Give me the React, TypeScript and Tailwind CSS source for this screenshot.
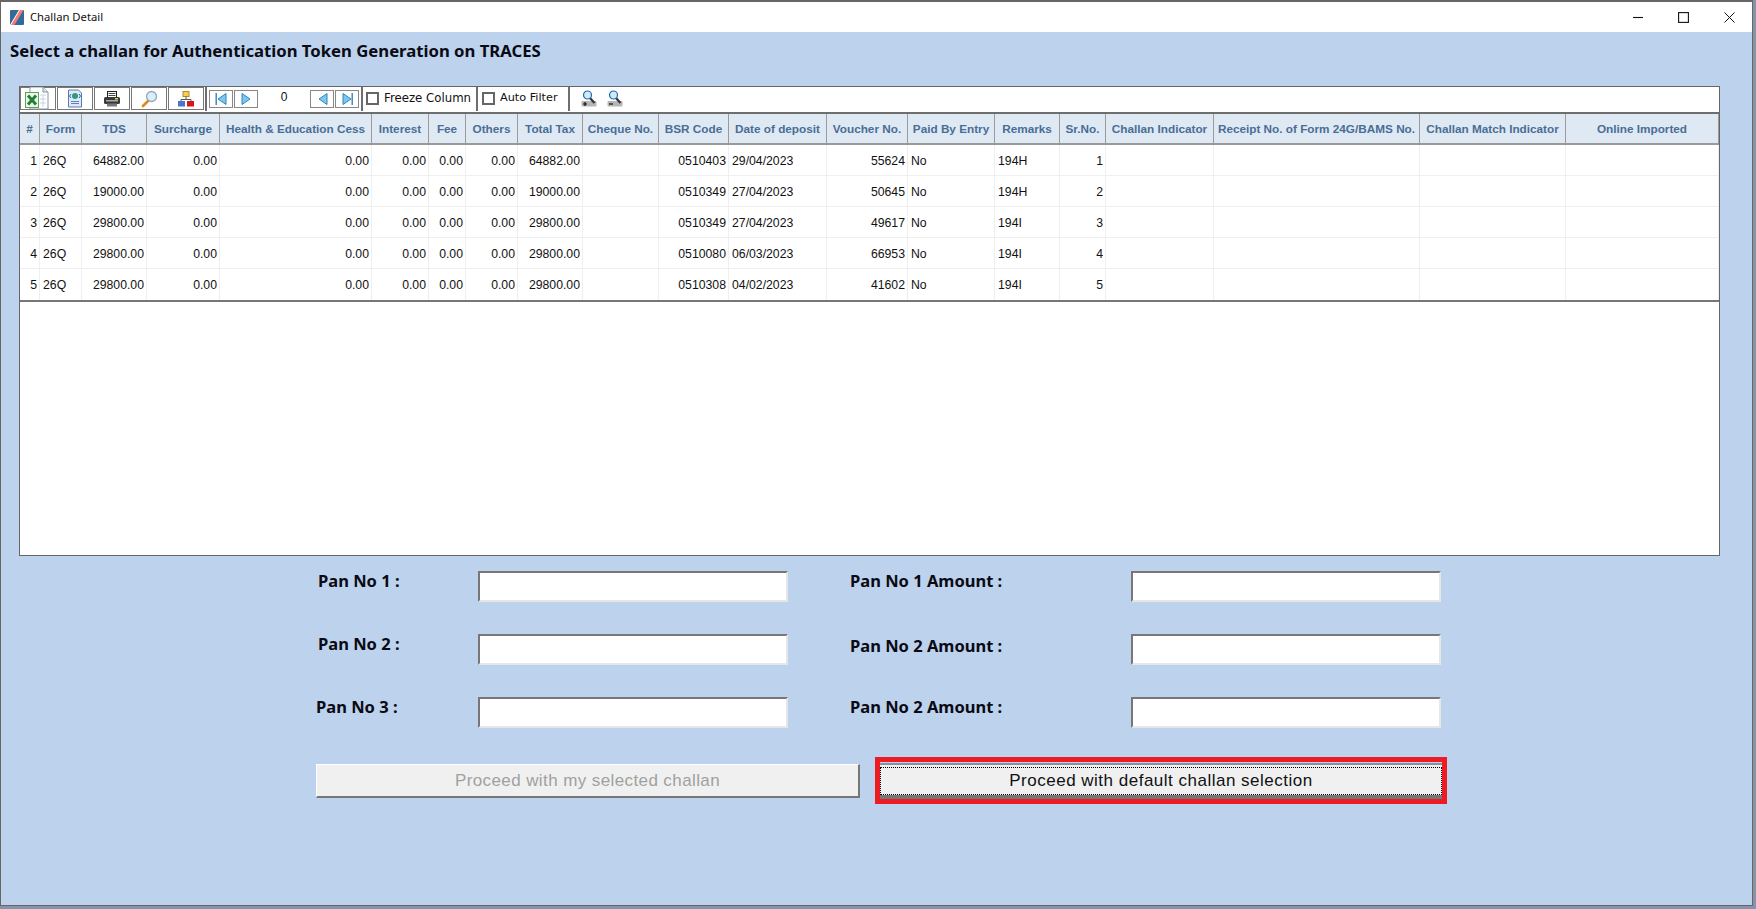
const cols =
  'grid grid-cols-[20px_42px_65px_73px_152px_57px_37px_52px_65px_76px_70px_98px_81px_87px_65px_46px_108px_206px_146px_153px]';

const headers = [
  '#', 'Form', 'TDS', 'Surcharge', 'Health & Education Cess', 'Interest', 'Fee', 'Others', 'Total Tax',
  'Cheque No.', 'BSR Code', 'Date of deposit', 'Voucher No.', 'Paid By Entry', 'Remarks', 'Sr.No.',
  'Challan Indicator', 'Receipt No. of Form 24G/BAMS No.', 'Challan Match Indicator', 'Online Imported',
];

const rows = [
  ['1', '26Q', '64882.00', '0510403', '29/04/2023', '55624', '194H'],
  ['2', '26Q', '19000.00', '0510349', '27/04/2023', '50645', '194H'],
  ['3', '26Q', '29800.00', '0510349', '27/04/2023', '49617', '194I'],
  ['4', '26Q', '29800.00', '0510080', '06/03/2023', '66953', '194I'],
  ['5', '26Q', '29800.00', '0510308', '04/02/2023', '41602', '194I'],
];

function Cell({ children, left }: { children?: React.ReactNode; left?: boolean }) {
  return (
    <div
      className={`flex items-center border-r border-r-[#efefef] h-full pt-[2px] ${
        left ? 'justify-start pl-[3px]' : 'justify-end pr-[2px]'
      }`}
    >
      {children}
    </div>
  );
}

function ToolButton({ children }: { children: React.ReactNode }) {
  return (
    <div className="w-[36px] h-[23px] border border-[#777] flex items-center justify-center bg-white">
      {children}
    </div>
  );
}

function NavButton({ children }: { children: React.ReactNode }) {
  return (
    <div className="w-[24px] h-[18px] border border-[#888] flex items-center justify-center bg-white">{children}</div>
  );
}

function Tri({ dir, bar }: { dir: 'l' | 'r'; bar?: boolean }) {
  const points = dir === 'l' ? '12,1.5 12,12.5 4,7' : '3,1.5 3,12.5 11,7';
  return (
    <svg width="14" height="14" viewBox="0 0 14 14">
      <polygon points={points} fill="#7ec6ec" stroke="#2f86bf" strokeWidth="1" />
      {bar && (
        <rect x={dir === 'l' ? 1.5 : 11.5} y="1" width="1.4" height="12" fill="#2f86bf" />
      )}
    </svg>
  );
}

function ZoomIcon({ minus }: { minus?: boolean }) {
  return (
    <svg width="16" height="17" viewBox="0 0 16 17">
      <rect x="0.5" y="11" width="15" height="5.5" rx="1" fill="#b5b5b5" />
      <path d={minus ? 'M2 14h4' : 'M2 14h4M4 12v4'} stroke="#111" strokeWidth="1.2" fill="none" />
      <path d="M9 8l4.5 5" stroke="#333" strokeWidth="2.2" fill="none" />
      <circle cx="6.5" cy="5" r="4" fill="#cfeaf8" stroke="#1f6fa8" strokeWidth="1.2" />
    </svg>
  );
}

function Toolbar() {
  return (
    <div className="h-[25px] flex items-start bg-white text-[#111]">
      <div className="flex gap-[1px] w-[185px]">
        <ToolButton>
          <svg width="30" height="25" viewBox="0 0 30 25" className="-ml-[8px] -mt-[1px]">
            <path d="M11 1h13l5 5v17H11z" fill="#fff" stroke="#8a97a5" />
            <path d="M24 1v5h5" fill="#dbe4ee" stroke="#8a97a5" />
            <path d="M21 9h6M21 13h6M21 17h6M24 9v12" stroke="#c6d4e2" fill="none" />
            <rect x="6.500" y="6.500" width="13" height="15" fill="#eef6e8" stroke="#5aa35a" />
            <path d="M9 9.500l8 9M17 9.500l-8 9" stroke="#23803a" strokeWidth="3" fill="none" />
          </svg>
        </ToolButton>
        <ToolButton>
          <svg width="16" height="19" viewBox="0 0 16 19">
            <path d="M1.500 1h10l3 3v14h-13z" fill="#dfe9fa" stroke="#5a7bb0" />
            <path d="M4 12.500h8M4 14.500h8" stroke="#5b82c4" fill="none" />
            <circle cx="8" cy="7" r="3" fill="#2f9a7a" />
            <path d="M4 5l-1.500 2 1.500 2M12 5l1.500 2-1.500 2" stroke="#2a5ea8" fill="none" />
          </svg>
        </ToolButton>
        <ToolButton>
          <svg width="18" height="16" viewBox="0 0 18 16">
            <rect x="4.500" y="0.500" width="9" height="6" fill="#fff" stroke="#222" />
            <path d="M5.500 2.500h7M5.500 4.500h7" stroke="#444" fill="none" />
            <rect x="1" y="6" width="16" height="7" rx="1.500" fill="#3a3a3a" />
            <rect x="3" y="9" width="12" height="1.500" fill="#aaa" />
            <rect x="12" y="7" width="3" height="1.500" fill="#e3d23a" />
            <rect x="4" y="12.500" width="10" height="3" fill="#777" />
          </svg>
        </ToolButton>
        <ToolButton>
          <svg width="17" height="18" viewBox="0 0 17 18">
            <path d="M7 11l-5 5" stroke="#e08a1e" strokeWidth="2.800" strokeLinecap="round" fill="none" />
            <circle cx="10.500" cy="6.500" r="5" fill="#dbeefb" stroke="#8fa9c4" strokeWidth="1.300" />
          </svg>
        </ToolButton>
        <ToolButton>
          <svg width="16" height="16" viewBox="0 0 16 16">
            <rect x="5" y="0.500" width="6" height="5" fill="#f4cf57" stroke="#b18e22" />
            <path d="M8 5.500v3M3 10V8.500h10V10" stroke="#555" fill="none" />
            <rect x="0" y="10" width="7" height="5.500" fill="#4a76c9" />
            <rect x="9" y="10" width="7" height="5.500" fill="#d5161c" />
          </svg>
        </ToolButton>
      </div>
      <div className="h-[25px] w-[158px] border-l-2 border-r-2 border-[#6e6e6e] flex items-center pl-[2px] -mt-[1px]">
        <NavButton>
          <Tri dir="l" bar />
        </NavButton>
        <div className="ml-[1px]">
          <NavButton>
            <Tri dir="r" />
          </NavButton>
        </div>
        <div className="w-[52px] text-center text-[12px] -mt-[3px]">0</div>
        <NavButton>
          <Tri dir="l" />
        </NavButton>
        <div className="ml-[1px]">
          <NavButton>
            <Tri dir="r" bar />
          </NavButton>
        </div>
      </div>
      <label className="h-[25px] w-[115px] border-r-2 border-[#6e6e6e] flex items-center pl-[3px] -mt-[1px] font-['DejaVu_Sans'] text-[11.75px]">
        <span className="w-[13px] h-[13px] border-2 border-[#666] bg-white" />
        <span className="ml-[5px]">Freeze Column</span>
      </label>
      <label className="h-[25px] w-[92px] border-r-2 border-[#6e6e6e] flex items-center pl-[4px] -mt-[1px] font-['DejaVu_Sans'] text-[11.25px]">
        <span className="w-[13px] h-[13px] border-2 border-[#666] bg-white" />
        <span className="ml-[5px]">Auto Filter</span>
      </label>
      <div className="flex items-center gap-[10px] pl-[11px] h-[25px] -mt-[1px]">
        <ZoomIcon />
        <ZoomIcon minus />
      </div>
    </div>
  );
}

function Grid() {
  return (
    <div className="h-[470px] bg-white border border-[#666] ml-[18px] w-[1701px] overflow-hidden">
      <Toolbar />
      <div className={`${cols} h-[33px] bg-[#dfe9f3] border-t-2 border-b-2 border-t-[#6e6e6e] border-b-[#999]`}>
        {headers.map((h) => (
          <div
            key={h}
            className="flex items-center justify-center border-r-[1.5px] border-r-[#9a9a9a] text-[#4a6d96] font-bold text-[11.75px] whitespace-nowrap"
          >
            {h}
          </div>
        ))}
      </div>
      <div className="border-b-2 border-b-[#777] text-[12.25px] text-[#111]">
        {rows.map((r, i) => (
          <div
            key={r[0]}
            className={`${cols} h-[31px] ${i < rows.length - 1 ? 'border-b-[1.5px] border-b-[#efefef]' : ''}`}
          >
            <Cell>{r[0]}</Cell>
            <Cell left>{r[1]}</Cell>
            <Cell>{r[2]}</Cell>
            <Cell>0.00</Cell>
            <Cell>0.00</Cell>
            <Cell>0.00</Cell>
            <Cell>0.00</Cell>
            <Cell>0.00</Cell>
            <Cell>{r[2]}</Cell>
            <Cell />
            <Cell>{r[3]}</Cell>
            <Cell left>{r[4]}</Cell>
            <Cell>{r[5]}</Cell>
            <Cell left>No</Cell>
            <Cell left>{r[6]}</Cell>
            <Cell>{r[0]}</Cell>
            <Cell />
            <Cell />
            <Cell />
            <Cell />
          </div>
        ))}
      </div>
    </div>
  );
}

function Field() {
  return (
    <input
      readOnly
      className="w-[310px] h-[31px] bg-white border-2 border-t-[#777] border-l-[#777] border-r-[#e6e6e6] border-b-[#e6e6e6] outline-none"
    />
  );
}

const labelFont = "font-['Noto_Sans'] font-bold text-[16.5px] leading-[20px] text-[#0a0a14] whitespace-nowrap";

function PanRow({ left, right, indent, rightDrop }: { left: string; right: string; indent?: boolean; rightDrop?: boolean }) {
  return (
    <div className="flex pl-[315px]">
      <div className={`w-[162px] ${labelFont} ${indent ? 'pl-[2px]' : ''}`}>{left}</div>
      <Field />
      <div className={`w-[343px] pl-[62px] ${labelFont} ${rightDrop ? 'mt-[2px]' : ''}`}>{right}</div>
      <Field />
    </div>
  );
}

export default function App() {
  return (
    <div className="w-[1756px] h-[909px] bg-[#8494ad] overflow-hidden font-['Liberation_Sans',sans-serif]">
      <div className="w-[1753px] h-[906px] border-t-2 border-l border-r border-b border-[#666] flex flex-col">
        {/* Title bar */}
        <div className="h-[30px] bg-white flex items-center shrink-0">
          <svg width="14" height="15" viewBox="0 0 14 15" className="ml-[9px]">
            <rect x="0" y="0" width="14" height="15" rx="1" fill="#2f6c9e" />
            <path d="M9 0h4.500L4.500 15H0z" fill="#f47c72" />
            <path d="M9 0h1L1 15H0z" fill="#fff" />
          </svg>
          <span className="ml-[6px] font-['Noto_Sans'] text-[11.25px] text-[#111]">Challan Detail</span>
          <div className="ml-auto flex items-center">
            <svg width="10" height="10" viewBox="0 0 10 10">
              <path d="M0 5.500h10" stroke="#111" strokeWidth="1.100" />
            </svg>
            <svg width="11" height="11" viewBox="0 0 11 11" className="ml-[35px]">
              <rect x="0.600" y="0.600" width="9.800" height="9.800" fill="none" stroke="#111" strokeWidth="1.100" />
            </svg>
            <svg width="11" height="11" viewBox="0 0 11 11" className="ml-[35px] mr-[17px]">
              <path d="M0.500 0.500l10 10M10.500 0.500l-10 10" stroke="#111" strokeWidth="1" />
            </svg>
          </div>
        </div>

        {/* Body */}
        <div className="flex-1 bg-[#bdd2ec]">
          <h1 className="pl-[9px] pt-[9px] h-[54px] font-['Noto_Sans'] font-bold text-[16.7px] leading-[20px] text-[#0a0a14] whitespace-nowrap">
            Select a challan for Authentication Token Generation on TRACES
          </h1>
          <Grid />

          <div className="mt-[15px] flex flex-col gap-[32px]">
            <PanRow left="Pan No 1 :" right="Pan No 1 Amount :" indent />
            <PanRow left="Pan No 2 :" right="Pan No 2 Amount :" indent rightDrop />
            <PanRow left="Pan No 3 :" right="Pan No 2 Amount :" />
          </div>

          <div className="mt-[29px] flex items-start pl-[315px]">
            <button
              disabled
              className="mt-[7px] w-[544px] h-[34px] bg-[#f0f0f0] border-t border-l border-white border-b-2 border-r-2 border-b-[#777] border-r-[#777] text-[#a0a0a0] text-[17px] tracking-[0.4px]"
            >
              Proceed with my selected challan
            </button>
            <div className="ml-[15px] w-[572px] h-[47px] border-[5px] border-[#ed1c24] bg-[#bdd2ec] pt-[1px]">
              <button className="w-full h-[36px] bg-[#f0f0f0] border-t-2 border-b-[4px] border-t-[#8a8f98] border-b-[#777] pt-[2px] text-[17px] text-[#111] tracking-[0.5px]">
                <span className="flex items-center justify-center h-full border border-dotted border-black">
                  Proceed with default challan selection
                </span>
              </button>
            </div>
          </div>
        </div>
      </div>
    </div>
  );
}
